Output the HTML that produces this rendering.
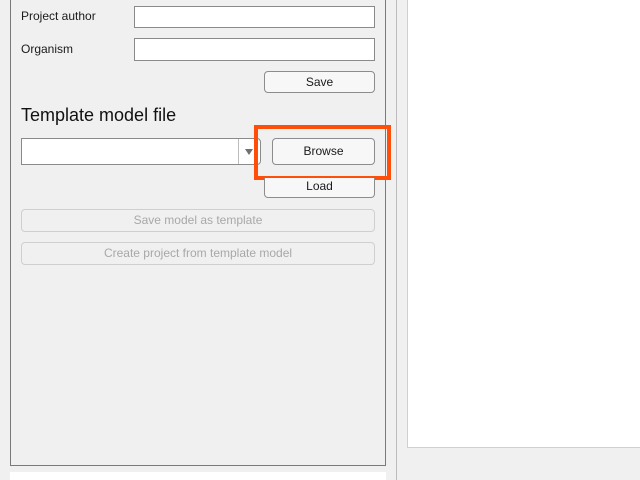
<!DOCTYPE html>
<html><head><style>
body{margin:0;width:640px;height:480px;background:#f0f0f0;position:relative;overflow:hidden;font-family:"Liberation Sans",sans-serif;font-size:12px;color:#1a1a1a}
div{position:absolute;box-sizing:border-box}
.in{background:#fff;border:1px solid #8a8a8a}
.btn{background:#f7f7f7;border:1px solid #8c8c8c;border-radius:4px;text-align:center;line-height:20px}
.dis{background:#f0f0f0;border:1px solid #cfcfcf;border-radius:4px;text-align:center;line-height:20px;color:#a8a8a8}
</style></head><body>
<div style="left:10px;top:-2px;width:376px;height:468px;border:1px solid #7a7a7a"></div>
<div style="left:10px;top:472px;width:376px;height:8px;background:#fff"></div>
<div style="left:396px;top:0;width:1px;height:480px;background:#bcbcbc"></div>
<div style="left:407px;top:0;width:233px;height:448px;background:#fff;border-left:1px solid #d0d0d0;border-bottom:1px solid #d0d0d0"></div>
<div style="left:21px;top:9px">Project author</div>
<div class="in" style="left:134px;top:6px;width:241px;height:22px"></div>
<div style="left:21px;top:42px">Organism</div>
<div class="in" style="left:134px;top:38px;width:241px;height:23px"></div>
<div class="btn" style="left:264px;top:71px;width:111px;height:22px">Save</div>
<div style="left:21px;top:105px;font-size:18px;color:#111">Template model file</div>
<div class="in" style="left:21px;top:138px;width:240px;height:27px;border-radius:0 4px 4px 0"></div>
<div style="left:238px;top:139px;width:1px;height:25px;background:#bdbdbd"></div>
<div style="left:245px;top:149px;width:0;height:0;border-left:4px solid transparent;border-right:4px solid transparent;border-top:6px solid #707070"></div>
<div class="btn" style="left:272px;top:138px;width:103px;height:27px;line-height:25px">Browse</div>
<div style="left:254px;top:125px;width:137px;height:55px;border:4px solid #ff4d0a"></div>
<div class="btn" style="left:264px;top:178px;width:111px;height:20px;line-height:16px;border-top:none;border-radius:0 0 4px 4px">Load</div>
<div class="dis" style="left:21px;top:209px;width:354px;height:23px">Save model as template</div>
<div class="dis" style="left:21px;top:242px;width:354px;height:23px">Create project from template model</div>
</body></html>
